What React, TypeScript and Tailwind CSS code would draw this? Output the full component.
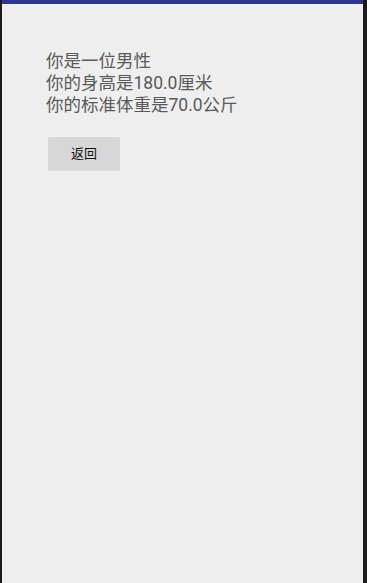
export default function App() {
  const lines = ["你是一位男性", "你的身高是180.0厘米", "你的标准体重是70.0公斤"]
  return (
    <div className="flex h-[583px] w-[367px] bg-[#1b1b1b]">
      <div className="ml-[2px] mr-[4px] flex flex-1 flex-col bg-[#eeeeee]">
        <div className="h-[4px] bg-[#2b3697]" />
        <div className="flex flex-col px-[44px] pt-[46px]" style={{ fontFamily: 'Roboto, "Noto Sans CJK SC", sans-serif' }}>
          <div className="text-[17.5px] leading-[22px] text-[#5a5a5a]">
            {lines.map((line, i) => (
              <div key={i}>{line}</div>
            ))}
          </div>
          <button className="mt-[21px] ml-[2px] flex h-[33px] w-[72px] items-center justify-center rounded-[2px] bg-[#d7d7d7] text-[13px] text-[#111] shadow-[0_1px_1px_rgba(0,0,0,0.08)]">
            返回
          </button>
        </div>
      </div>
    </div>
  )
}
